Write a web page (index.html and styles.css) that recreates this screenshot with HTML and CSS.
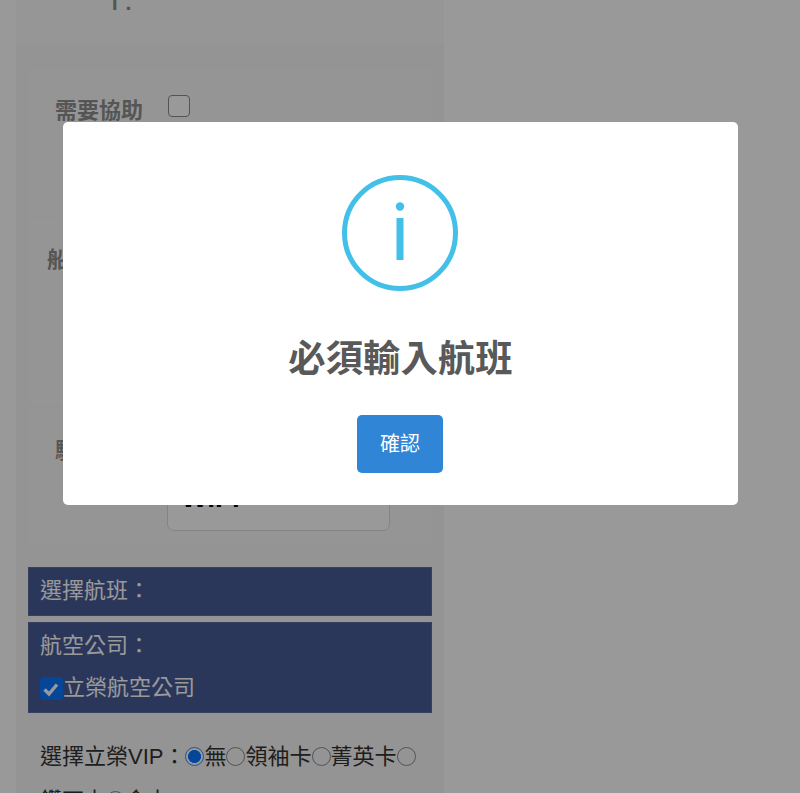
FILE: index.html
```html
<!DOCTYPE html>
<html lang="zh-Hant">
<head>
<meta charset="utf-8">
<title>航班</title>
<link rel="stylesheet" href="styles.css">
</head>
<body>
<div class="viewport">
  <main class="card">
    <section class="row row-top">
      <span class="top-label">T:</span>
    </section>
    <section class="row row-help">
      <label class="field-label" for="help">需要協助</label>
      <input id="help" class="help-check" type="checkbox">
    </section>
    <section class="row row-ship">
      <span class="field-label ship-label">船公司</span>
    </section>
    <section class="row row-driver">
      <span class="field-label">駐點</span>
      <div class="text-box"><span class="text-value">WiFi</span></div>
    </section>
    <div class="panel panel-title">選擇航班：</div>
    <div class="panel panel-airline">
      <div class="panel-line">航空公司：</div>
      <label class="panel-line airline-option"><input class="airline-check" type="checkbox" checked>立榮航空公司</label>
    </div>
    <div class="vip">選擇立榮VIP：<input class="radio" type="radio" name="vip" checked>無<input class="radio" type="radio" name="vip">領袖卡<input class="radio" type="radio" name="vip">菁英卡<input class="radio" type="radio" name="vip">鑽石卡<input class="radio" type="radio" name="vip">金卡</div>
  </main>
</div>
<div class="overlay">
  <div class="modal" role="dialog">
    <svg class="info-icon" viewBox="0 0 116 116" aria-hidden="true">
      <circle cx="58" cy="58" r="55.5" fill="none" stroke="#43c0e8" stroke-width="5"/>
      <circle cx="58" cy="31.5" r="4.2" fill="#43c0e8"/>
      <rect x="54.5" y="43" width="7" height="42" fill="#43c0e8"/>
    </svg>
    <h2 class="modal-title">必須輸入航班</h2>
    <button class="confirm" type="button">確認</button>
  </div>
</div>
</body>
</html>
```
FILE: styles.css
```css
* { box-sizing: border-box; }
html, body {
  margin: 0;
  height: 793px;
  overflow: hidden;
  background: #fff;
  font-family: "Liberation Sans", "Noto Sans CJK TC", sans-serif;
}
.viewport {
  height: 793px;
  overflow: hidden;
  padding-left: 16px;
}
.card {
  width: 428px;
  min-height: 793px;
  padding: 0 12px;
  background: #f7f7f7;
}
.row {
  background: #f9f9f9;
  margin-bottom: 3px;
  position: relative;
}
.row-top {
  height: 45px;
  margin: 0 -12px 23px;
  background: #fafafa;
  padding: 0 0 0 89px;
  overflow: hidden;
}
.top-label {
  display: block;
  margin-top: -21px;
  font-size: 32px;
  line-height: 40px;
  letter-spacing: 3px;
  font-weight: 400;
  color: #8c8c8c;
}
.row-help {
  height: 147px;
  padding: 27px 0 0 27px;
  display: flex;
  align-items: flex-start;
  gap: 25px;
}
.field-label {
  font-size: 22px;
  line-height: 32px;
  font-weight: 700;
  color: #8e8e8e;
}
.help-check {
  appearance: none;
  width: 22px;
  height: 22px;
  margin: 0;
  border: 1.5px solid #8a8a8a;
  border-radius: 4px;
  background: #fff;
}
.row-ship {
  height: 187px;
  padding: 26px 0 0 19px;
}
.row-driver {
  height: 137px;
  padding: 27px 0 0 27px;
  margin-bottom: 22px;
}
.row-driver .field-label { display: block; }
.text-box {
  position: absolute;
  left: 139px;
  top: 40px;
  width: 223px;
  height: 83px;
  background: #fff;
  border: 1px solid #dcdcdc;
  border-radius: 7px;
  padding: 33px 0 0 13px;
}
.text-value {
  display: block;
  font-size: 28px;
  line-height: 32px;
  color: #000;
  font-weight: 700;
}
.panel {
  background: #465a96;
  border: 1px solid #5c6d9e;
  color: #fff;
  font-size: 22px;
  padding: 0 11px;
}
.panel-title {
  height: 49px;
  line-height: 46px;
  margin-bottom: 6px;
}
.panel-airline {
  height: 91px;
  padding-top: 2px;
}
.panel-line {
  height: 42px;
  line-height: 42px;
}
.airline-option {
  display: flex;
  align-items: center;
}
.airline-check {
  appearance: none;
  width: 23px;
  height: 23px;
  margin: 0;
  border-radius: 4px;
  background: #0a75ff url("data:image/svg+xml,%3Csvg xmlns='http://www.w3.org/2000/svg' viewBox='0 0 23 23'%3E%3Cpath d='M4.5 12.5 9 17l8-9.5' fill='none' stroke='%23fff' stroke-width='3.4'/%3E%3C/svg%3E") center / 23px 23px no-repeat;
  flex: none;
}
.vip {
  margin-top: 22px;
  padding: 0 12px;
  font-size: 22px;
  line-height: 44px;
  color: #333;
}
.radio {
  appearance: none;
  width: 19px;
  height: 19px;
  margin: 0;
  border: 1px solid #8a8a8a;
  border-radius: 50%;
  background: transparent;
  vertical-align: -2px;
}
.radio:checked {
  border: 1.5px solid #3f8ae6;
  background: radial-gradient(circle, #0a75ff 0 6.2px, #fff 6.8px);
}
.overlay {
  position: fixed;
  inset: 0;
  background: rgba(0, 0, 0, 0.4);
  padding: 122px 62px 0 63px;
}
.modal {
  height: 383px;
  background: #fff;
  border-radius: 5px;
  padding-top: 53px;
  display: flex;
  flex-direction: column;
  align-items: center;
}
.info-icon {
  width: 116px;
  height: 116px;
  display: block;
  flex: none;
  margin-right: 1px;
}
.modal-title {
  margin: 40px 0 0;
  font-size: 37.4px;
  line-height: 56px;
  font-weight: 700;
  color: #595959;
}
.confirm {
  margin: 28px 1px 0 0;
  width: 86px;
  height: 58px;
  border: 0;
  border-radius: 5px;
  background: #3085d6;
  color: #fff;
  font-family: inherit;
  font-size: 20px;
  padding: 0 0 4px;
}
```
